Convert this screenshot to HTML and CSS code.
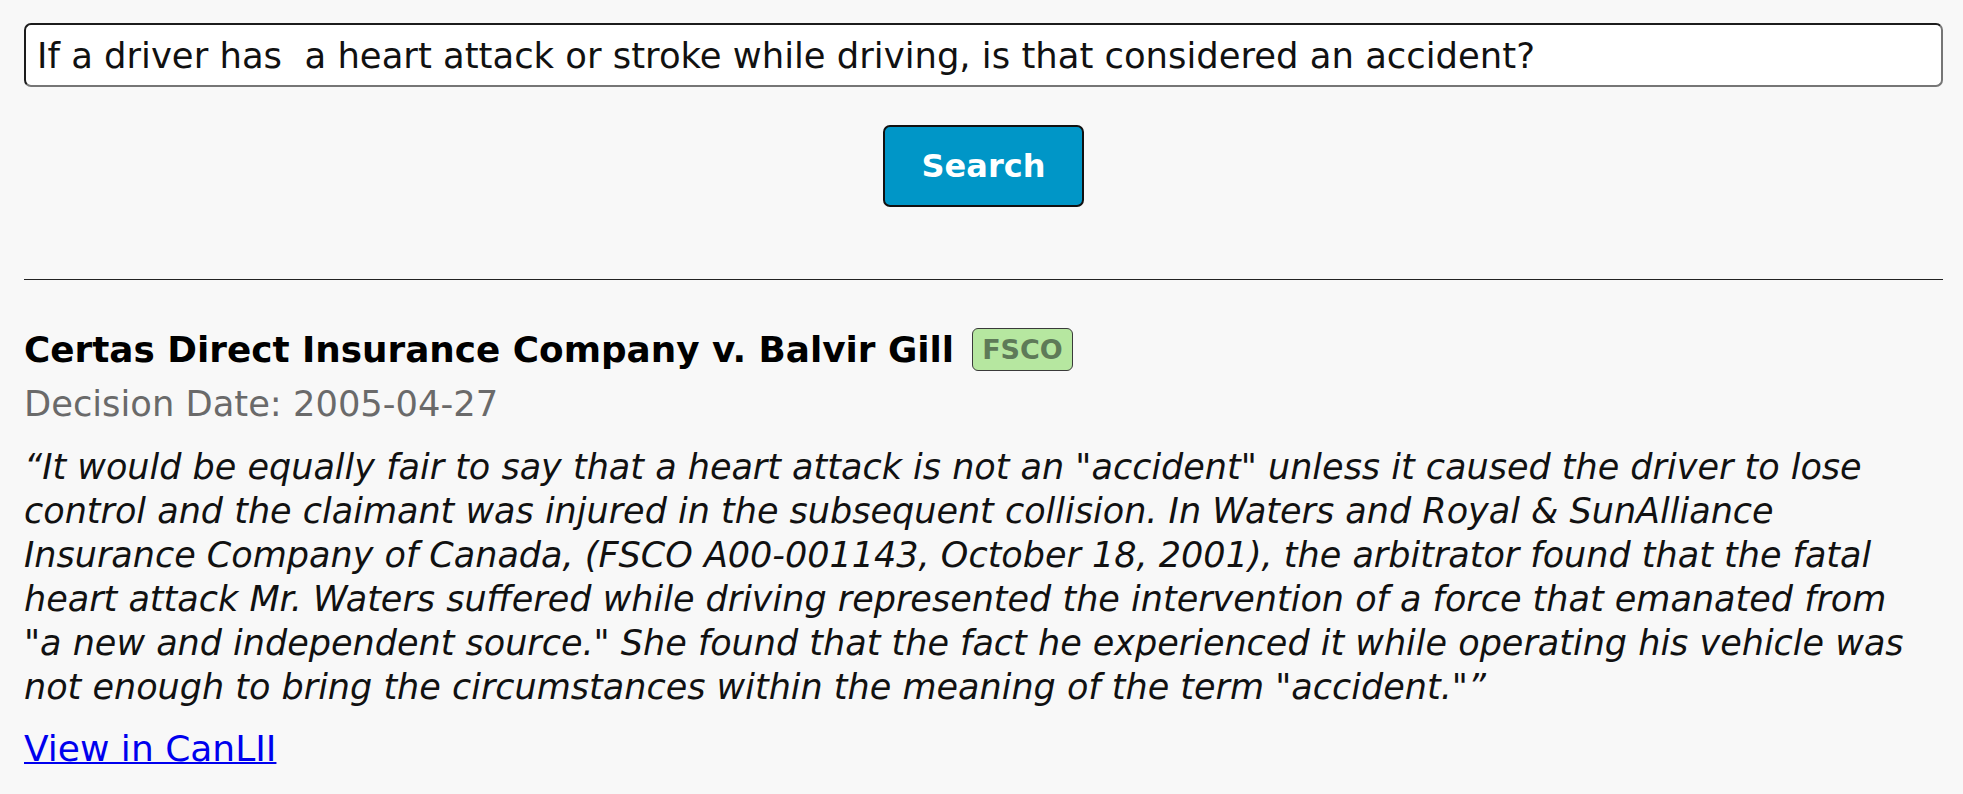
FILE: index.html
```html
<!DOCTYPE html>
<html lang="en">
<head>
  <meta charset="UTF-8">
  <title>Case Search</title>
  <link rel="stylesheet" href="styles.css">
</head>
<body>

  <div class="page">
    <!-- Suchfeld -->
    <form class="search" onsubmit="return false;">
      <input type="text" class="search-input" value="If a driver has  a heart attack or stroke while driving, is that considered an accident?">
      <button type="submit" class="search-btn">Search</button>
    </form>

    <hr class="divider">

    <!-- Ergebnis -->
    <div class="result">
      <div class="result-head">
        <h2 class="result-title">Certas Direct Insurance Company v. Balvir Gill</h2>
        <span class="badge">FSCO</span>
      </div>
      <div class="result-date">Decision Date: 2005-04-27</div>
      <p class="result-quote">&ldquo;It would be equally fair to say that a heart attack is not an "accident" unless it caused the driver to lose control and the claimant was injured in the subsequent collision. In Waters and Royal &amp; SunAlliance Insurance Company of Canada, (FSCO A00-001143, October 18, 2001), the arbitrator found that the fatal heart attack Mr. Waters suffered while driving represented the intervention of a force that emanated from "a new and independent source." She found that the fact he experienced it while operating his vehicle was not enough to bring the circumstances within the meaning of the term "accident."&rdquo;</p>
      <a class="result-link" href="#">View in CanLII</a>
    </div>
  </div>

</body>
</html>
```

FILE: styles.css
```css
body {
  margin: 0;
  background: #f8f8f8;
  font-family: "DejaVu Sans", sans-serif;
  color: #111;
}
.page {
  padding: 23px 20px 0 24px;
}
.search {
  display: flex;
  flex-direction: column;
  align-items: center;
  gap: 38px;
  margin: 0;
}
.search-input {
  align-self: stretch;
  box-sizing: border-box;
  height: 64px;
  padding: 0 11px;
  font-family: "DejaVu Sans", sans-serif;
  font-size: 35.4px;
  color: #111;
  background: #fff;
  border: 2px solid;
  border-color: #1c1c1c #767676 #767676 #1c1c1c;
  border-radius: 7px;
  outline: none;
}
.search-btn {
  box-sizing: border-box;
  height: 82px;
  width: 201px;
  padding: 0;
  font-family: "DejaVu Sans", sans-serif;
  font-size: 32px;
  font-weight: 600;
  color: #fff;
  background: #0096c7;
  border: 2px solid #111;
  border-radius: 7px;
  cursor: pointer;
}
.search-btn:hover {
  background: #0088b5;
}
.divider {
  border: none;
  border-top: 1px solid #222;
  margin: 72px 0 0;
}
.result-head {
  display: flex;
  align-items: center;
  gap: 18px;
  margin-top: 48px;
}
.result-title {
  margin: 0;
  font-size: 35.8px;
  font-weight: 700;
  line-height: 43px;
  color: #000;
}
.badge {
  box-sizing: border-box;
  display: inline-flex;
  align-items: center;
  height: 43px;
  padding: 0 9px;
  font-size: 27px;
  font-weight: 700;
  color: #5e7a58;
  background: #b6e7a0;
  border: 1px solid #3a3a3a;
  border-radius: 6px;
}
.result-date {
  margin-top: 11px;
  font-size: 35.3px;
  line-height: 44px;
  color: #6a6a6a;
}
.result-quote {
  max-width: 1885px;
  margin: 19px 0 0;
  font-size: 35px;
  font-style: italic;
  line-height: 44px;
  color: #111;
}
.result-link {
  display: inline-block;
  margin-top: 18px;
  font-size: 36px;
  line-height: 44px;
  color: #0000ee;
  text-decoration-thickness: 2px;
}
```
